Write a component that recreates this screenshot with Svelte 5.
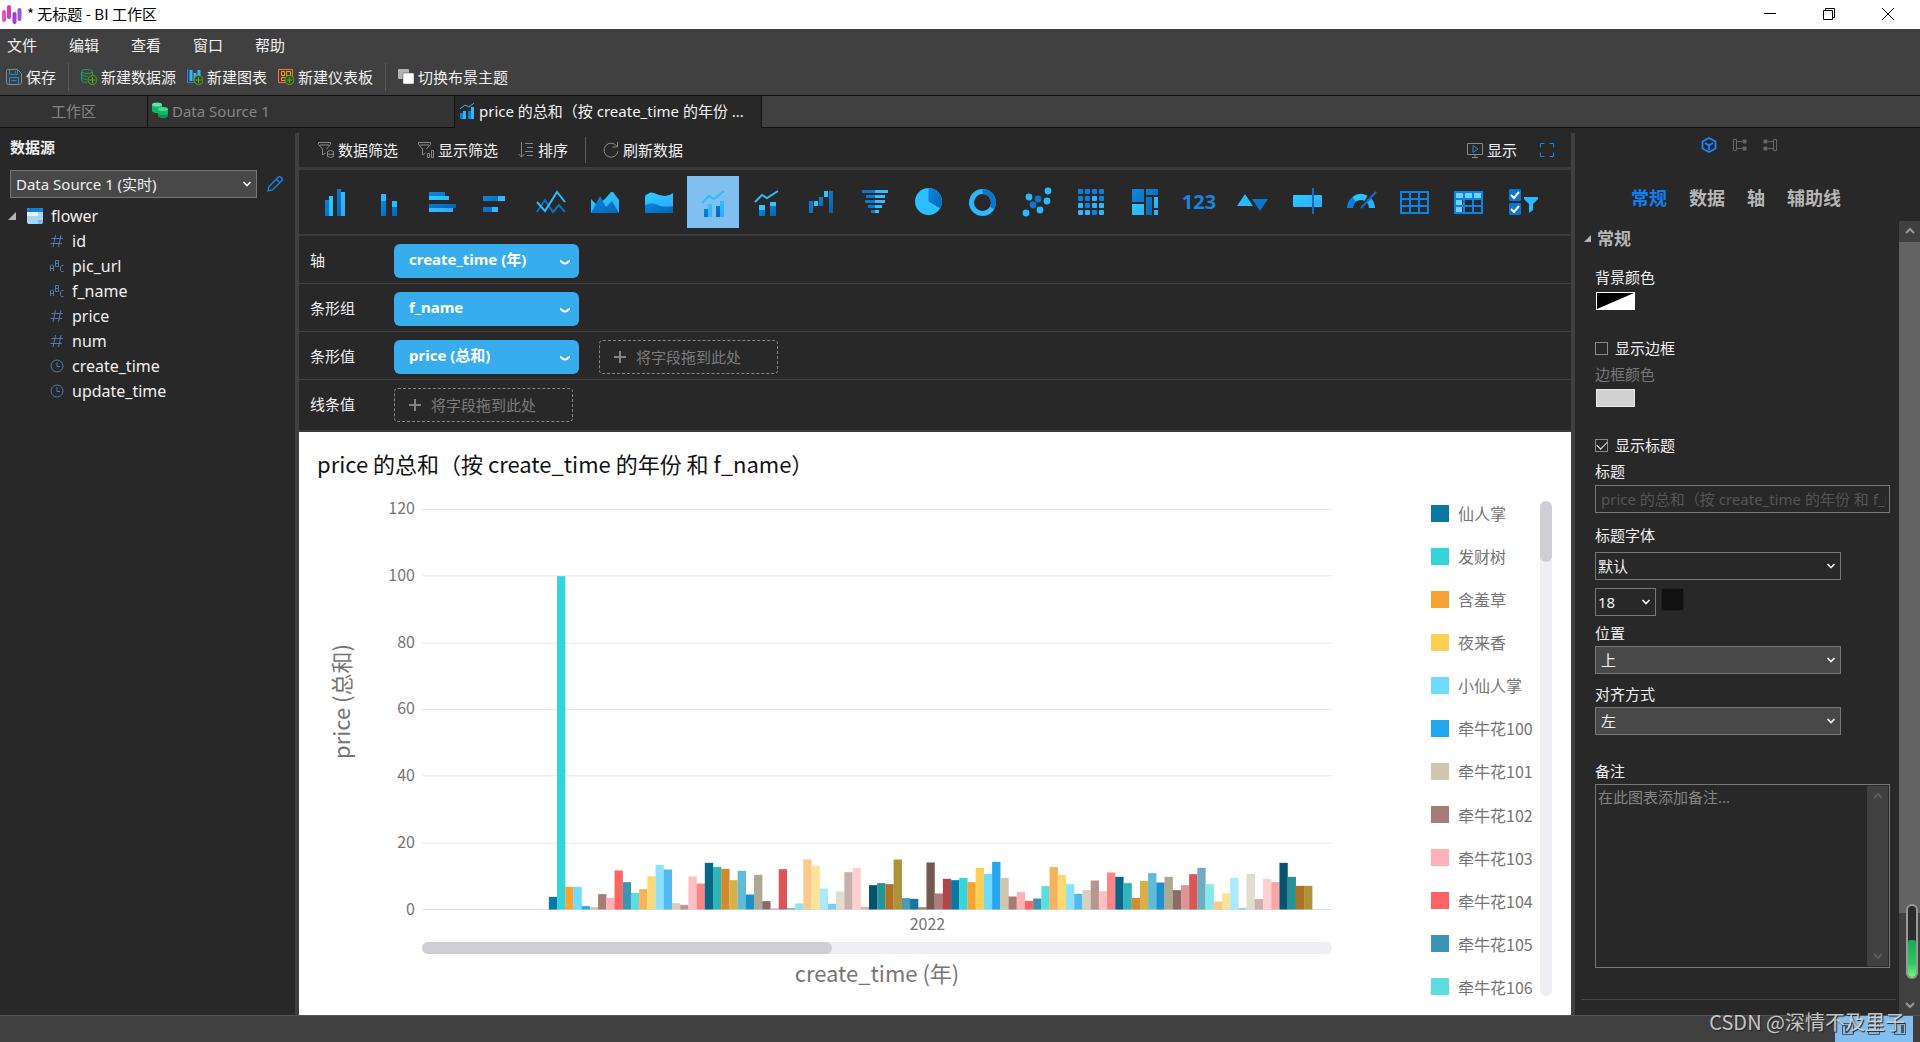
<script lang="ts">
  const menus = ['文件', '编辑', '查看', '窗口', '帮助'];

  const fields = [
    { name: 'id', kind: 'number' },
    { name: 'pic_url', kind: 'text' },
    { name: 'f_name', kind: 'text' },
    { name: 'price', kind: 'number' },
    { name: 'num', kind: 'number' },
    { name: 'create_time', kind: 'time' },
    { name: 'update_time', kind: 'time' }
  ];

  const chartTypes = [
    'column', 'stacked-column', 'bar', 'stacked-bar', 'line', 'area', 'stacked-area',
    'column-line', 'stacked-column-line', 'waterfall', 'funnel', 'pie', 'donut', 'scatter',
    'heatmap', 'treemap', 'value', 'trend', 'bullet', 'gauge', 'table', 'pivot', 'control'
  ];
  let activeType = $state('column-line');

  const slots = [
    { label: '轴', chip: 'create_time (年)', drop: false },
    { label: '条形组', chip: 'f_name', drop: false },
    { label: '条形值', chip: 'price (总和)', drop: true },
    { label: '线条值', chip: '', drop: true }
  ];

  const palette = [
    '#0a78a0', '#33d4db', '#f9a234', '#fdd055', '#6edbff', '#24a7ee', '#d0c5ad', '#a67c76', '#ffb1b5', '#ff6464',
    '#3e93b3', '#5cdde0', '#f8b25c', '#fdd976', '#8be2ff', '#50b9f1', '#d9cfbd', '#b59692', '#ffc0c3', '#ff8484',
    '#096687', '#2db5b9', '#d38a2d', '#d8b047', '#5ebbda', '#1f8fca', '#b0a790', '#8e6a64', '#d99799', '#d95556',
    '#6dacc2', '#86e8ea', '#fbc98a', '#fee49a', '#a9eaff', '#7acbf5', '#e2dccd', '#c8b0ad', '#ffd0d2', '#ffa3a3',
    '#07536d', '#259498', '#ad7124', '#b0923a', '#4d99b3', '#1a75a5', '#908976', '#745751', '#b27c7e', '#b24646'
  ];

  const values = [
    3.8, 100, 6.8, 6.8, 1, 0.7, 4.6, 3.5, 11.7, 8.2, 5, 6.1, 10, 13.4, 12, 1.9, 1.4, 9.9, 7.8, 14,
    12.8, 12.2, 8.8, 11.6, 4.5, 10.4, 2.5, 0.3, 12.1, 0.4, 1.8, 15, 13.1, 6.3, 1.7, 5.4, 11.2, 12.5, 0.8, 7.3,
    7.9, 7.6, 15, 3.4, 3.2, 0.7, 14.1, 4.8, 9.2, 8.8, 9.5, 8.2, 12.5, 10.7, 14.3, 9.5, 3.9, 5.2, 2.6, 3.3,
    7, 12.7, 10.4, 7.6, 4.7, 5.8, 8.7, 5.5, 11.1, 9.8, 7.9, 3.5, 8.6, 10.9, 8.1, 9.8, 5.8, 7.3, 10.6, 12.5,
    7.6, 2.4, 4.9, 9.5, 0.4, 10.7, 3.1, 9.2, 8.2, 14, 9.8, 7.1, 7.1
  ];

  // the fourth series has no rows in this year, so colours shift by one after it
  const bars = values.map((value, i) => ({
    x: 126.7 + i * 8.2,
    height: (value / 120) * 398,
    color: palette[(i < 3 ? i : i + 1) % palette.length]
  }));

  const ticks = [120, 100, 80, 60, 40, 20, 0];

  const legend = [
    '仙人掌', '发财树', '含羞草', '夜来香', '小仙人掌', '牵牛花100',
    '牵牛花101', '牵牛花102', '牵牛花103', '牵牛花104', '牵牛花105', '牵牛花106'
  ];

  const heatLight = [6, 8, 10, 11, 12, 13, 15];
  const funnelRows = [[5, 26], [9, 19], [8, 20], [11, 14], [14, 8]];
  const dots = [[29, 7, 1], [10, 13, 1], [19, 15, 0], [28, 17, 1], [14, 21, 0], [21, 26, 1], [7, 29, 1]];

  const propTabs = ['常规', '数据', '轴', '辅助线'];
  let activeTab = $state('常规');
  let showBorder = $state(false);
  let showTitle = $state(true);
</script>

{#snippet chevron()}
  <svg class="chevron" width="10" height="8" viewBox="0 0 10 8" fill="none" stroke="currentColor" stroke-width="1.700">
    <path d="M1.5 2l3.5 3.5L8.5 2" />
  </svg>
{/snippet}

{#snippet typeIcon(type: string)}
  <svg class="type-icon" width="36" height="36" viewBox="0 0 36 36">
    {#if type === 'column'}
      <path fill="url(#dark)" d="M8 16h4v16H8zM20 5h4v27h-4z" />
      <path fill="url(#light)" d="M12 12h4v20h-4zM24 8h4v24h-4z" />
    {:else if type === 'stacked-column'}
      <path fill="#2bbcff" d="M10 10h5v7h-5zM21 17h5v6h-5z" />
      <path fill="url(#dark)" d="M10 17h5v15h-5zM21 23h5v9h-5z" />
    {:else if type === 'bar'}
      <path fill="url(#dark)" d="M4 8h16v4H4zM4 20h27v4H4z" />
      <path fill="url(#light)" d="M4 12h20v4H4zM4 24h24v4H4z" />
    {:else if type === 'stacked-bar'}
      <path fill="url(#dark)" d="M4 12h15v5H4zM4 23h9v5H4z" />
      <path fill="#2bbcff" d="M19 12h7v5h-7zM13 23h6v5h-6z" />
    {:else if type === 'line'}
      <g fill="none" stroke-width="2">
        <path stroke="#0a70c6" d="M4 28l8-12 8 12 6-7 6 7" />
        <path stroke="#2bbcff" d="M4 18l8 9L24 8l8 10" />
      </g>
    {:else if type === 'area'}
      <path fill="url(#light)" d="M4 15l6 6 8-6 6-7h2l6 8v13H4z" />
      <path fill="url(#dark)" d="M4 29l9-17 6 11 6-6 7 12z" />
    {:else if type === 'stacked-area'}
      <path fill="url(#light)" d="M4 12q5-5 9-3 12 6 19 0v16H4z" />
      <path fill="url(#dark)" d="M4 21q8-4 15 1 6 1 13 0v7H4z" />
    {:else if type === 'column-line'}
      <path fill="none" stroke="#2bbcff" stroke-width="2" d="M7 19l7-7 5 3L29 7" />
      <path fill="url(#dark)" d="M9 25h4v8H9zM21 22h4v11h-4z" />
      <path fill="url(#light)" d="M13 20h4v13h-4zM25 17h4v16h-4z" />
    {:else if type === 'stacked-column-line'}
      <path fill="none" stroke="#2bbcff" stroke-width="2" d="M6 18l7-7 5 3L29 7" />
      <path fill="#2bc8ff" d="M10 21h6v5h-6zM21 18h6v4h-6z" />
      <path fill="url(#dark)" d="M10 26h6v6h-6zM21 22h6v10h-6z" />
    {:else if type === 'waterfall'}
      <path fill="url(#dark)" d="M6 17h4v12H6zM16 13h4v9h-4zM26 7h4v22h-4z" />
      <path fill="#2bc8ff" d="M11 17h4v5h-4zM21 7h4v6h-4z" />
    {:else if type === 'funnel'}
      {#each funnelRows as [x, width], i}
        <rect {x} y={6 + i * 5} {width} height="3" fill="#0a78d0" />
        <rect x="18" y={6 + i * 5} width={x + width - 18} height="3" fill="#34bcff" />
      {/each}
    {:else if type === 'pie'}
      <circle cx="17.5" cy="17.5" r="13.5" fill="#2bc0ff" />
      <path fill="url(#dark)" d="M17.5 17.5V4a13.5 13.5 0 0 1 11.7 20.2z" />
    {:else if type === 'donut'}
      <g fill="none" stroke-width="5">
        <circle cx="17.5" cy="18.5" r="11" stroke="#2bb8ff" />
        <path stroke="#0a76cc" d="M17.500 7.500a11 11 0 0 1 9.500 16.500" />
      </g>
    {:else if type === 'scatter'}
      {#each dots as [cx, cy, bright]}
        <circle {cx} {cy} r="3.4" fill={bright ? '#2bb8ff' : '#0a76cc'} />
      {/each}
    {:else if type === 'heatmap'}
      {#each Array(16) as _, i}
        <rect
          x={5 + (i % 4) * 7}
          y={5 + Math.floor(i / 4) * 7}
          width="5"
          height="5"
          rx="1"
          fill={heatLight.includes(i) ? '#2bb8ff' : '#0a7fdc'}
        />
      {/each}
    {:else if type === 'treemap'}
      <path fill="url(#dark)" d="M5 5h12v13H5zM19 5h12v6H19zM19 13h6v18h-6z" />
      <path fill="url(#light)" d="M5 20h12v11H5zM27 13h4v11h-4zM27 26h4v5h-4z" />
    {:else if type === 'trend'}
      <path fill="#2bb8ff" d="M2 22l8-12 8 12z" />
      <path fill="#0a76cc" d="M17 15h16l-8 12z" />
    {:else if type === 'bullet'}
      <rect x="4" y="11" width="29" height="12" rx="1" fill="url(#light)" />
      <path stroke="#0a6fc0" stroke-width="2" d="M24 4v26" />
    {:else if type === 'gauge'}
      <g fill="none" stroke-width="6">
        <path stroke="#0a80dc" d="M7 24a11 11 0 0 1 4-8.500" />
        <path stroke="#2bc0ff" d="M11 15.500a11 11 0 0 1 12-1.200" />
        <path stroke="#2bb0ff" d="M26 16.500a11 11 0 0 1 3 7.500" />
      </g>
      <path stroke="#0a70c6" stroke-width="2" d="M18 24L33 8" />
    {:else if type === 'table' || type === 'pivot'}
      {#if type === 'pivot'}
        <path fill="#6fd0ff" d="M4 8h27v6H4zM4 14h7v15H4z" />
      {/if}
      <path fill="none" stroke="#0a84e2" stroke-width="2" d="M4 8h27v21H4zM4 15h27M4 22h27M13 8v21M22 8v21" />
    {:else}
      <path fill="#0a76cc" d="M5 5h10l1 1v10l-1 1H5l-1-1V6zM5 19h10l1 1v10l-1 1H5l-1-1V20z" />
      <path fill="none" stroke="#fff" stroke-width="2" d="M6 11l3 3 5-6M6 25l3 3 5-6" />
      <path fill="#2bb8ff" d="M19 13h14v2l-5 5v6l-4 3v-9l-5-5z" />
    {/if}
  </svg>
{/snippet}

<svg class="defs" width="0" height="0" aria-hidden="true">
  <defs>
    <linearGradient id="dark" x1="0" y1="0" x2="1" y2="1">
      <stop offset="0" stop-color="#0f86e0" />
      <stop offset="1" stop-color="#0266b4" />
    </linearGradient>
    <linearGradient id="light" x1="0" y1="0" x2="1" y2="1">
      <stop offset="0" stop-color="#2bccff" />
      <stop offset="1" stop-color="#2ea9ff" />
    </linearGradient>
  </defs>
</svg>

<div class="app">
  <header class="title-bar">
    <svg width="20" height="22" viewBox="0 0 20 22">
      <g fill="none" stroke-width="4" stroke-linecap="round">
        <path stroke="#e64fc6" d="M2 9v8" />
        <path stroke="#d63dc0" d="M7 4v10" />
        <path stroke="#a63ad4" d="M12.500 11v8" />
        <path stroke="#9457e8" d="M17.500 7v9" />
      </g>
    </svg>
    <span class="window-title">* 无标题 - BI 工作区</span>
    <div class="window-buttons">
      <button aria-label="最小化">
        <svg width="12" height="12" viewBox="0 0 12 12"><path stroke="#000" d="M0 5.500h12" /></svg>
      </button>
      <button aria-label="还原">
        <svg width="12" height="12" viewBox="0 0 12 12" fill="none" stroke="#000">
          <path d="M.5 2.500h9v9h-9zM2.500 2.500v-2h9v9h-2" />
        </svg>
      </button>
      <button aria-label="关闭">
        <svg width="12" height="12" viewBox="0 0 12 12"><path stroke="#000" d="M0 0l12 12M12 0L0 12" /></svg>
      </button>
    </div>
  </header>

  <nav class="menu-bar">
    {#each menus as menu}
      <button>{menu}</button>
    {/each}
  </nav>

  <div class="toolbar">
    <button class="tool">
      <svg width="16" height="16" viewBox="0 0 16 16" fill="none">
        <path stroke="#8a8a8a" d="M1.500.5h10l4 4v9q0 2-2 2h-11q-2 0-2-2v-11q0-2 1-2z" />
        <path stroke="#1b8ae6" d="M3.500.5v5h8v-5M9.500 2v2M3.500 15.500v-7h9v7M5.500 11.500h5" />
      </svg>
      保存
    </button>
    <span class="divider"></span>
    <button class="tool">
      <svg width="16" height="16" viewBox="0 0 16 16" fill="none" stroke="#18a566">
        <ellipse cx="6" cy="2.500" rx="5.500" ry="2" />
        <path d="M.5 2.500v9q1 2 5.500 2M11.500 2.500V6M.5 5.500q2 2 6 2M.5 8.500q2 2 5 2" />
        <circle cx="11.500" cy="11" r="4.500" fill="#404040" stroke="#4fb800" />
        <path stroke="#4fb800" d="M11.500 8v6M8.500 11h6" />
      </svg>
      新建数据源
    </button>
    <button class="tool">
      <svg width="16" height="16" viewBox="0 0 16 16" fill="none" stroke="#1b8ae6">
        <path d="M.5 0v13.500H8" />
        <path stroke="#2bb8ff" stroke-width="3" d="M4 1v11M8 4v8M12 1v6" />
        <circle cx="11.500" cy="11" r="4.500" fill="#404040" stroke="#4fb800" />
        <path stroke="#4fb800" d="M11.500 8v6M8.500 11h6" />
      </svg>
      新建图表
    </button>
    <button class="tool">
      <svg width="16" height="16" viewBox="0 0 16 16" fill="none" stroke="#ffa21a">
        <path stroke="#ff6d3a" d="M.5.500h14v13H.5z" />
        <path d="M3.500 2.500h3v4h-3zM8.500 2.500h4v4h-4zM3.500 8.500h4v3h-4z" />
        <circle cx="11.500" cy="11" r="4.500" fill="#404040" stroke="#4fb800" />
        <path stroke="#4fb800" d="M11.500 8v6M8.500 11h6" />
      </svg>
      新建仪表板
    </button>
    <span class="divider"></span>
    <button class="tool">
      <svg width="16" height="16" viewBox="0 0 16 16">
        <rect width="11" height="10" rx="1" fill="#b4b4b4" />
        <rect x="5" y="4" width="11" height="11" rx="1" fill="#fff" stroke="#555" stroke-width=".5" />
      </svg>
      切换布景主题
    </button>
  </div>

  <div class="tabs">
    <button class="tab home">工作区</button>
    <button class="tab">
      <svg width="16" height="18" viewBox="0 0 16 18">
        <path fill="#12b567" d="M0 2v7q1 2 5 2t5-2V2z" />
        <ellipse cx="5" cy="2.500" rx="5" ry="2" fill="#63e6a5" />
        <path fill="#0a9552" d="M6 7v7q1 2 5 2t5-2V7z" />
        <path fill="#12b567" d="M6 7v4q1 2 5 2t5-2V7z" />
        <ellipse cx="11" cy="7" rx="5" ry="2" fill="#48d893" />
      </svg>
      Data Source 1
    </button>
    <button class="tab active">
      <svg width="16" height="18" viewBox="0 0 16 18">
        <path fill="none" stroke="#2bb8ff" d="M1 7l5-4 4 2 5-4" />
        <path fill="#0a7fdc" d="M1 11h3v6H1zM9 9h3v8H9z" />
        <path fill="#2bb8ff" d="M4 9h3v8H4zM12 5h3v12h-3z" />
      </svg>
      <span>price 的总和（按 create_time 的年份 ...</span>
    </button>
  </div>

  <div class="workspace">
    <aside class="sources">
      <h2>数据源</h2>
      <div class="source-row">
        <div class="select filled source-select">
          <select aria-label="数据源"><option>Data Source 1 (实时)</option></select>
          {@render chevron()}
        </div>
        <button class="edit" aria-label="编辑">
          <svg width="16" height="16" viewBox="0 0 16 16" fill="none" stroke="#1688e8" stroke-width="1.300">
            <path d="M1 15l1-4.500L11.500 1q1-.8 2 0l1.500 1.500q.8 1 0 2L5.500 14zM9.500 3.500l3 3" />
          </svg>
        </button>
      </div>
      <ul class="tree">
        <li class="table-node">
          <svg width="8" height="8" viewBox="0 0 8 8"><path fill="#b5b5b5" d="M8 0v8H0z" /></svg>
          <svg width="16" height="16" viewBox="0 0 16 16">
            <rect width="16" height="16" rx="2" fill="#a6d6ff" />
            <path fill="#e6f3ff" d="M0 4h5v4H0zM5 4h6v4H5z" />
            <path fill="#6fbdfb" d="M11 12h5v2l-2 2h-3z" />
            <path fill="#0a7fdc" d="M0 4V2l2-2h12l2 2v2z" />
          </svg>
          flower
        </li>
        {#each fields as field}
          <li class="field-node">
            <svg width="14" height="14" viewBox="0 0 14 14" fill="none" stroke="#527ab0">
              {#if field.kind === 'number'}
                <path d="M5.500 1L3 13M11 1L8.500 13M1.500 4.500H13M.5 9.500H12" />
              {:else if field.kind === 'text'}
                <path d="M.5 12V7l1-1h1l1 1v5M.5 9.500h3M5.500 1.500v6h3v-3h-3 3v-3zM13.500 6.500h-2l-1 1v4l1 1h2" />
              {:else}
                <circle cx="7" cy="7" r="6" />
                <path d="M7 3.500V7.500h3" />
              {/if}
            </svg>
            {field.name}
          </li>
        {/each}
      </ul>
    </aside>
    <div class="splitter"></div>

    <main class="editor">
      <div class="editor-tools">
        <button class="tool">
          <svg width="16" height="16" viewBox="0 0 16 16" fill="none" stroke="#8a8a8a">
            <path d="M.5.500h12v2L8.500 7M.5.500v2L4.500 7v6l3-2M2 3h9" />
            <path d="M9.500 9.500q3-2 6 0v5q-3 2-6 0zM9.500 12q3 1 6 0" />
          </svg>
          数据筛选
        </button>
        <button class="tool">
          <svg width="16" height="16" viewBox="0 0 16 16" fill="none" stroke="#8a8a8a">
            <path d="M.5.500h12v2L8.500 7M.5.500v2L4.500 7v6l3-2M2 3h9" />
            <path d="M9.500 11.500h2v4h-2zM13.500 8.500h2v7h-2z" />
          </svg>
          显示筛选
        </button>
        <button class="tool">
          <svg width="16" height="16" viewBox="0 0 16 16" fill="none" stroke="#8a8a8a">
            <path d="M3.500 0v15M.5 12l3 3 3-3M7 1.500h8M9 5.500h6M7 9.500h8M9 13.500h6" />
          </svg>
          排序
        </button>
        <span class="divider"></span>
        <button class="tool">
          <svg width="16" height="16" viewBox="0 0 16 16" fill="none" stroke="#8a8a8a">
            <path d="M14 4.500A7 7 0 1 0 15 9M14.500 0v5h-5" />
          </svg>
          刷新数据
        </button>
        <span class="spacer"></span>
        <button class="tool">
          <svg width="16" height="16" viewBox="0 0 16 16" fill="none" stroke="#8a8a8a">
            <path d="M.5 1.500h15v11H.5zM8 12.500v3M5 15.500h6" />
            <path stroke="#1b8ae6" d="M6 3.500v7l5-3.500z" />
          </svg>
          显示
        </button>
        <button class="tool fullscreen" aria-label="全屏">
          <svg width="14" height="14" viewBox="0 0 14 14" fill="none" stroke="#0a8cff">
            <path d="M.5 4.500v-4h4M9.500.500h4v4M13.500 9.500v4h-4M4.500 13.500h-4v-4" />
          </svg>
        </button>
      </div>

      <div class="types">
        {#each chartTypes as type}
          <button class="type" class:active={activeType === type} aria-label={type} onclick={() => (activeType = type)}>
            {#if type === 'value'}
              <span class="digits">123</span>
            {:else}
              {@render typeIcon(type)}
            {/if}
          </button>
        {/each}
      </div>

      <div class="slots">
        {#each slots as slot}
          <div class="slot">
            <span class="slot-label">{slot.label}</span>
            {#if slot.chip}
              <button class="chip">
                <span>{slot.chip}</span>
                <svg width="12" height="8" viewBox="0 0 12 8" fill="none" stroke="#fff" stroke-width="2">
                  <path d="M1 2q1 0 2 1 3 3 6 0 1-1 2-1" />
                </svg>
              </button>
            {/if}
            {#if slot.drop}
              <div class="drop">
                <svg width="12" height="12" viewBox="0 0 12 12"><path stroke="#858585" stroke-width="2" d="M6 0v12M0 6h12" /></svg>
                将字段拖到此处
              </div>
            {/if}
          </div>
        {/each}
      </div>

      <section class="chart">
        <h1>price 的总和（按 create_time 的年份 和 f_name）</h1>
        <div class="chart-body">
          <div class="plot-grid">
            <div class="y-title"><span>price (总和)</span></div>
            <div class="y-labels">
              {#each ticks as tick}
                <span>{tick}</span>
              {/each}
            </div>
            <div class="plot">
              <svg viewBox="0 0 909 399" preserveAspectRatio="none">
                {#each ticks as tick, i}
                  <rect x="0" y={Math.round((i * 398) / 6)} width="909" height="1" fill={tick ? '#e8e8ea' : '#dcdcdf'} />
                {/each}
                {#each bars as bar}
                  <rect x={bar.x} y={398.5 - bar.height} width="8.3" height={bar.height} fill={bar.color} />
                {/each}
              </svg>
            </div>
            <div class="x-label">2022</div>
            <div class="x-scroll"><div class="thumb"></div></div>
            <div class="x-title">create_time (年)</div>
          </div>
          <ul class="legend">
            {#each legend as name, i}
              <li><i style="background: {palette[i]}"></i>{name}</li>
            {/each}
          </ul>
          <div class="y-scroll"><div class="thumb"></div></div>
        </div>
      </section>
    </main>
    <div class="splitter"></div>

    <aside class="properties">
      <div class="panel-icons">
        <button aria-label="属性">
          <svg width="16" height="16" viewBox="0 0 16 16" fill="none" stroke="#1688ff" stroke-width="1.800">
            <path d="M8 1l6.500 3.500v7L8 15l-6.500-3.500v-7zM4 6l4 2.500L12 6M8 8.500V13" />
          </svg>
        </button>
        <button aria-label="输入">
          <svg width="14" height="14" viewBox="0 0 14 14" fill="none" stroke="#666">
            <path d="M.5 1.500h3v11h-3zM4 3.500h5M4 10.500h5" />
            <path fill="#666" d="M10 2h3v3h-3zM10 9h3v3h-3z" />
          </svg>
        </button>
        <button aria-label="输出">
          <svg width="14" height="14" viewBox="0 0 14 14" fill="none" stroke="#666">
            <path d="M10.500 1.500h3v11h-3zM5 3.500h5M5 10.500h5" />
            <path fill="#666" d="M1 2h3v3H1zM1 9h3v3H1z" />
          </svg>
        </button>
      </div>
      <div class="prop-tabs">
        {#each propTabs as tab}
          <button class:active={activeTab === tab} onclick={() => (activeTab = tab)}>{tab}</button>
        {/each}
      </div>
      <div class="prop-scroll">
        <div class="prop-body">
          <h3>
            <svg width="7" height="7" viewBox="0 0 7 7"><path fill="#b5b5b5" d="M7 0v7H0z" /></svg>
            常规
          </h3>
          <div class="form">
            <div class="group">
              <span class="label">背景颜色</span>
              <button class="swatch" aria-label="背景颜色">
                <svg width="37" height="16" viewBox="0 0 37 16"><path d="M0 0h37L0 16z" /></svg>
              </button>
            </div>
            <div class="group">
              <label class="check"><input type="checkbox" bind:checked={showBorder} />显示边框</label>
              <span class="label muted">边框颜色</span>
              <button class="swatch gray" aria-label="边框颜色"></button>
            </div>
            <div class="group">
              <label class="check"><input type="checkbox" bind:checked={showTitle} />显示标题</label>
              <label class="label" for="title">标题</label>
              <input id="title" class="text" type="text" placeholder="price 的总和（按 create_time 的年份 和 f_name）" />
            </div>
            <div class="group fonts">
              <label class="label" for="font">标题字体</label>
              <div class="select">
                <select id="font"><option>默认</option></select>
                {@render chevron()}
              </div>
              <div class="size-row">
                <div class="select size">
                  <select aria-label="字号"><option>18</option></select>
                  {@render chevron()}
                </div>
                <button class="color" aria-label="字体颜色"></button>
              </div>
            </div>
            <div class="group place">
              <label class="label" for="position">位置</label>
              <div class="select filled">
                <select id="position"><option>上</option></select>
                {@render chevron()}
              </div>
            </div>
            <div class="group align">
              <label class="label" for="align">对齐方式</label>
              <div class="select filled">
                <select id="align"><option>左</option></select>
                {@render chevron()}
              </div>
            </div>
            <div class="group notes">
              <label class="label" for="notes">备注</label>
              <div class="notes-box">
                <textarea id="notes" placeholder="在此图表添加备注..."></textarea>
                <div class="notes-scroll">
                  <svg width="10" height="8" viewBox="0 0 10 8"><path d="M1 6l4-4 4 4" /></svg>
                  <svg width="10" height="8" viewBox="0 0 10 8"><path d="M1 2l4 4 4-4" /></svg>
                </div>
              </div>
            </div>
          </div>
          <hr />
        </div>
        <div class="panel-scroll">
          <svg width="10" height="8" viewBox="0 0 10 8"><path d="M1 6l4-4 4 4" /></svg>
          <div class="thumb"></div>
          <svg width="10" height="8" viewBox="0 0 10 8"><path d="M1 2l4 4 4-4" /></svg>
        </div>
      </div>
    </aside>
  </div>

  <footer class="status-bar">
    <div class="layout-switch">
      <button aria-label="左侧面板">
        <svg width="12" height="12" viewBox="0 0 12 12"><path d="M.5.500h11v11H.5z" /><rect x="3" y="2" width="3" height="8" /></svg>
      </button>
      <button aria-label="底部面板">
        <svg width="12" height="12" viewBox="0 0 12 12"><path d="M.5.500h11v11H.5z" /><rect x="2" y="3" width="8" height="2" /></svg>
      </button>
      <button aria-label="右侧面板">
        <svg width="12" height="12" viewBox="0 0 12 12"><path d="M.5.500h11v11H.5z" /><rect x="7" y="2" width="3" height="8" /></svg>
      </button>
    </div>
  </footer>

  <div class="meter"><div></div></div>
  <div class="credit">CSDN @深情不及里子</div>
</div>

<style>
  :global(body) {
    background: #282828;
  }

  .app {
    position: relative;
    display: flex;
    flex-direction: column;
    min-height: 100vh;
    color: #f0f0f0;
    font: 15px/20px 'Noto Sans', 'Noto Sans CJK SC', sans-serif;
  }

  .app :global(*) {
    box-sizing: border-box;
  }

  .defs {
    position: absolute;
  }

  svg {
    flex: none;
  }

  button {
    padding: 0;
    border: 0;
    background: none;
    color: inherit;
    font: inherit;
    cursor: pointer;
  }

  ul {
    margin: 0;
    padding: 0;
    list-style: none;
  }

  .title-bar {
    display: flex;
    align-items: center;
    gap: 5px;
    height: 29px;
    padding: 0 3px 1px 2px;
    background: #fff;
    color: #000;
  }

  .window-title {
    flex: 1;
    font-family: 'Noto Sans CJK SC', sans-serif;
  }

  .window-buttons {
    display: flex;
  }

  .window-buttons button {
    display: flex;
    align-items: center;
    justify-content: center;
    width: 59px;
    height: 28px;
  }

  .menu-bar {
    display: flex;
    gap: 32px;
    padding: 6px 7px;
    background: #404040;
  }

  .toolbar {
    display: flex;
    align-items: center;
    gap: 11px;
    height: 34px;
    padding: 0 6px 2px;
    background: #404040;
  }

  .tool {
    display: flex;
    align-items: center;
    gap: 4px;
  }

  .divider {
    width: 1px;
    height: 28px;
    margin: 0 1px;
    background: #5a5a5a;
  }

  .tabs {
    display: flex;
    height: 33px;
    border: solid #111;
    border-width: 1px 0;
    background: #404040;
  }

  .tab {
    display: flex;
    align-items: center;
    gap: 4px;
    width: 307px;
    padding: 0 4px 1px;
    border-right: 1px solid #111;
    background: #333;
    color: #858585;
    white-space: nowrap;
  }

  .tab.home {
    justify-content: center;
    width: 148px;
  }

  .tab.active {
    margin-bottom: -1px;
    padding-bottom: 2px;
    background: #282828;
    color: #f4f4f4;
  }

  .workspace {
    display: flex;
    flex: 1;
    background: #282828;
  }

  .splitter {
    width: 4px;
    margin-top: 5px;
    background: #404040;
  }

  .sources {
    width: 295px;
    padding: 9px 0 0 10px;
  }

  h2 {
    margin: 0 0 13px;
    font: bold 15px/20px 'Noto Sans CJK SC', sans-serif;
  }

  .source-row {
    display: flex;
    align-items: center;
    gap: 10px;
  }

  .source-select {
    width: 247px;
  }

  .select {
    position: relative;
    display: flex;
    align-items: center;
    height: 28px;
  }

  .select :global(.chevron) {
    position: absolute;
    right: 5px;
    pointer-events: none;
  }

  select {
    width: 100%;
    height: 100%;
    padding: 0 20px 0 2px;
    border: 1px solid #777;
    border-radius: 0;
    background: #282828;
    color: #f0f0f0;
    font: inherit;
    appearance: none;
  }

  .filled select {
    padding-left: 5px;
    background: #484848;
  }

  .edit {
    display: flex;
  }

  .tree {
    padding-top: 5px;
    font-size: 16px;
  }

  .tree li {
    display: flex;
    align-items: center;
    gap: 8px;
    height: 25px;
  }

  .table-node svg + svg {
    margin-left: 3px;
  }

  .table-node {
    margin-left: -2px;
  }

  .field-node {
    padding-left: 40px;
  }

  .editor {
    display: flex;
    flex: 1;
    flex-direction: column;
    min-width: 0;
  }

  .editor-tools {
    display: flex;
    align-items: center;
    gap: 20px;
    height: 42px;
    padding: 5px 17px 0 19px;
    border-bottom: 3px solid #3b3b3b;
  }

  .editor-tools .divider {
    height: 26px;
    margin: 0 -3px;
  }

  .editor-tools .fullscreen {
    margin-left: 3px;
  }

  .spacer {
    flex: 1;
  }

  .types {
    display: flex;
    gap: 2px;
    padding: 6px 10px;
    border-bottom: 2px solid #3b3b3b;
  }

  .type {
    display: flex;
    align-items: center;
    justify-content: center;
    width: 52px;
    height: 52px;
  }

  .type.active {
    background: #82bff1;
  }

  .digits {
    color: #1487e0;
    font-size: 20px;
    font-weight: 700;
  }

  .slot {
    display: flex;
    align-items: flex-start;
    gap: 20px;
    height: 48px;
    padding: 8px 0 0 11px;
    border-bottom: 1px solid #3f3f3f;
  }

  .slot:last-child {
    height: 52px;
    border-bottom: 2px solid #3b3b3b;
  }

  .slot-label {
    width: 64px;
    line-height: 32px;
  }

  .chip {
    display: flex;
    align-items: center;
    justify-content: space-between;
    width: 185px;
    height: 34px;
    padding: 0 8px 4px 15px;
    border-radius: 6px;
    background: #38adee;
    color: #fff;
    font-weight: 700;
  }

  .chip svg {
    margin-top: 8px;
  }

  .drop {
    display: flex;
    align-items: center;
    gap: 10px;
    width: 179px;
    height: 34px;
    padding-left: 14px;
    border: 1px dashed #858585;
    border-radius: 4px;
    color: #7c7c7c;
  }

  .chart {
    display: flex;
    flex: 1;
    flex-direction: column;
    padding: 16px 19px 0 18px;
    background: #fff;
    color: #757575;
    font-family: 'Noto Sans CJK SC', sans-serif;
  }

  h1 {
    margin: 0;
    color: #111;
    font-size: 22px;
    font-weight: 400;
    line-height: 30px;
  }

  .chart-body {
    display: flex;
    flex: 1;
    padding-top: 23px;
  }

  .plot-grid {
    display: grid;
    flex: 1;
    grid-template-columns: 46px 52px 1fr;
    grid-template-rows: 1fr 32px 12px 61px;
    min-width: 0;
    padding-top: 8px;
    font-size: 16px;
  }

  .y-title {
    display: flex;
    align-items: center;
    justify-content: center;
    margin-bottom: 16px;
    font-size: 22px;
    line-height: 30px;
  }

  .y-title span {
    writing-mode: vertical-rl;
    text-orientation: sideways;
    rotate: 180deg;
  }

  .y-labels {
    display: flex;
    flex-direction: column;
    justify-content: space-between;
    margin: -12px 0 -8px;
    text-align: right;
  }

  .plot {
    position: relative;
    margin-left: 7px;
  }

  .plot svg {
    position: absolute;
    width: 100%;
    height: 100%;
  }

  .x-label,
  .x-scroll,
  .x-title {
    grid-column: 3;
    margin-left: 7px;
  }

  .x-label {
    padding: 3px 0 0 11%;
    text-align: center;
  }

  .x-scroll,
  .y-scroll {
    border-radius: 6px;
    background: #efeef3;
  }

  .x-scroll .thumb {
    width: 45%;
    height: 12px;
    border-radius: 6px;
    background: #cfced4;
  }

  .x-title {
    padding-top: 3px;
    font-size: 22px;
    line-height: 30px;
    text-align: center;
  }

  .legend {
    display: flex;
    flex-direction: column;
    justify-content: space-between;
    width: 109px;
    margin-left: 99px;
    padding: 2px 0 18px;
    font-size: 16px;
    white-space: nowrap;
  }

  .legend li {
    display: flex;
    align-items: center;
    gap: 9px;
  }

  .legend i {
    width: 18px;
    height: 17px;
  }

  .y-scroll {
    width: 12px;
    margin-bottom: 19px;
  }

  .y-scroll .thumb {
    height: 61px;
    border-radius: 6px;
    background: #cfced4;
  }

  .properties {
    display: flex;
    flex-direction: column;
    width: 345px;
  }

  .panel-icons {
    display: flex;
    align-items: center;
    justify-content: center;
    gap: 16px;
    height: 34px;
    padding-right: 17px;
  }

  .panel-icons button {
    display: flex;
  }

  .prop-tabs {
    display: flex;
    align-items: center;
    justify-content: center;
    gap: 22px;
    height: 59px;
    padding: 11px 23px 0 0;
    color: #b5b5b5;
    font: 700 18px/20px 'Noto Sans CJK SC', sans-serif;
  }

  .prop-tabs .active {
    color: #0a80f5;
  }

  .prop-scroll {
    display: flex;
    flex: 1;
  }

  .prop-body {
    flex: 1;
    min-width: 0;
  }

  h3 {
    display: flex;
    align-items: center;
    gap: 6px;
    height: 34px;
    margin: 0 0 12px;
    padding-left: 9px;
    color: #b5b5b5;
    font: 700 17px/20px 'Noto Sans CJK SC', sans-serif;
  }

  .form {
    padding: 0 9px 0 20px;
  }

  .group {
    margin-bottom: 28px;
  }

  .label {
    display: block;
    margin-bottom: 4px;
  }

  .muted {
    color: #777;
  }

  .swatch {
    display: block;
    width: 39px;
    height: 18px;
    margin: 5px 0 0 1px;
    border: 1px solid #fff;
    background: #fff;
  }

  .swatch svg {
    display: block;
  }

  .swatch.gray {
    border-color: #e8e8e8;
    background: #d2d2d2;
  }

  .check {
    display: flex;
    align-items: center;
    gap: 7px;
    margin-bottom: 6px;
  }

  .check input {
    width: 13px;
    height: 13px;
    margin: 0;
    border: 1px solid #8a8a8a;
    appearance: none;
  }

  .check input:checked::before {
    content: '';
    display: block;
    width: 9px;
    height: 5px;
    margin: 1px 0 0 1px;
    border: solid #f0f0f0;
    border-width: 0 0 1px 1px;
    rotate: -45deg;
  }

  .text {
    display: block;
    width: 100%;
    height: 28px;
    padding: 0 3px 0 5px;
    border: 1px solid #777;
    background: none;
    color: #f0f0f0;
    font: inherit;
  }

  .text::placeholder {
    color: #555;
  }

  .form .select {
    width: 246px;
  }

  .form .size {
    width: 61px;
  }

  .fonts {
    margin: -16px 0 7px;
  }

  .fonts .label {
    margin-bottom: 7px;
  }

  .size-row {
    display: flex;
    gap: 5px;
    margin-top: 8px;
  }

  .color {
    width: 23px;
    height: 23px;
    border: 1px solid #222;
    background: #111;
  }

  .place {
    margin-bottom: 10px;
  }

  .align {
    margin-bottom: 26px;
  }

  .place .label,
  .align .label,
  .notes .label {
    margin-bottom: 3px;
  }

  .notes-box {
    display: flex;
    height: 184px;
    padding: 1px;
    border: 1px solid #777;
  }

  textarea {
    flex: 1;
    min-width: 0;
    padding: 1px;
    border: 0;
    background: none;
    color: #f0f0f0;
    font: inherit;
    resize: none;
  }

  textarea::placeholder {
    color: #858585;
  }

  .notes-scroll {
    display: flex;
    flex-direction: column;
    justify-content: space-between;
    align-items: center;
    width: 21px;
    padding: 6px 0;
    background: #404040;
  }

  .notes-scroll path,
  .panel-scroll path {
    fill: none;
    stroke: #5c5c5c;
    stroke-width: 2;
  }

  .notes {
    margin-bottom: 31px;
  }

  hr {
    height: 1px;
    margin: 0 3px 15px 6px;
    border: 0;
    background: #484848;
  }

  .panel-scroll {
    display: flex;
    flex-direction: column;
    align-items: center;
    gap: 7px;
    width: 21px;
    padding: 6px 0;
    background: #404040;
  }

  .panel-scroll path {
    stroke: #999;
  }

  .panel-scroll .thumb {
    flex: 1;
    width: 100%;
    margin-bottom: 81px;
    background: #636363;
  }

  .status-bar {
    display: flex;
    justify-content: flex-end;
    height: 27px;
    padding-right: 7px;
    border-top: 1px solid #555;
    background: #404040;
  }

  .layout-switch {
    display: flex;
    align-items: center;
    justify-content: space-around;
    width: 78px;
    background: #82bff1;
  }

  .layout-switch button {
    display: flex;
  }

  .layout-switch path {
    fill: none;
    stroke: #555;
  }

  .layout-switch rect {
    fill: #555;
  }

  .meter {
    position: absolute;
    right: 2px;
    bottom: 63px;
    display: flex;
    align-items: flex-end;
    width: 12px;
    height: 75px;
    border: 2px solid #999;
    border-radius: 6px;
    background: #2c2c2c;
  }

  .meter div {
    width: 100%;
    height: 37px;
    border-radius: 2px 2px 4px 4px;
    background: linear-gradient(#16a957, #2cc463 60%, #75f57c);
  }

  .credit {
    position: absolute;
    right: 15px;
    bottom: 8px;
    color: rgba(225, 225, 225, 0.85);
    font: 20px/24px 'Noto Sans CJK SC', sans-serif;
    text-shadow: 1px 1px 1px #222;
  }
</style>
